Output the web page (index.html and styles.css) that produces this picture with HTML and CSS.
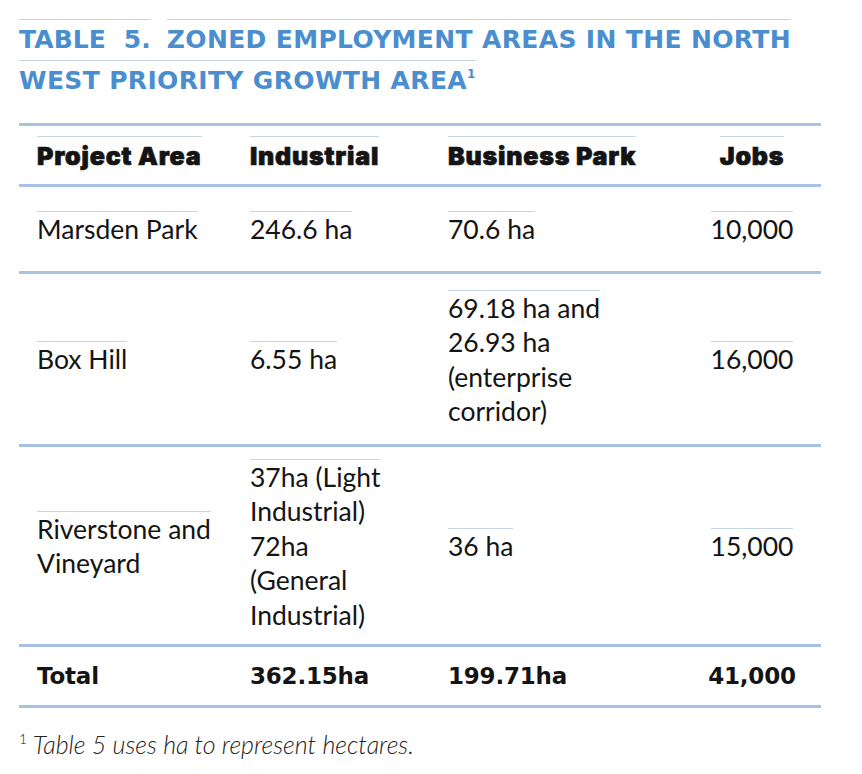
FILE: index.html
```html
<!DOCTYPE html>
<html lang="en">
<head>
<meta charset="utf-8">
<title>Table 5</title>
<link rel="stylesheet" href="styles.css">
</head>
<body>
<div class="page">
  <h1 class="title"><span class="ol ol-title ol-label">TABLE&nbsp; 5.</span> <span class="ol ol-title ol-gap">ZONED EMPLOYMENT AREAS IN THE NORTH<br>WEST PRIORITY GROWTH AREA<sup class="sup">1</sup></span></h1>

  <div class="table">
    <div class="row row-head">
      <div class="cell c1"><span class="ol ol-head">Project Area</span></div>
      <div class="cell c2"><span class="ol ol-head">Industrial</span></div>
      <div class="cell c3"><span class="ol ol-head">Business Park</span></div>
      <div class="cell c4"><span class="ol ol-head">Jobs</span></div>
    </div>
    <div class="row row-1">
      <div class="cell c1"><span class="ol">Marsden Park</span></div>
      <div class="cell c2"><span class="ol">246.6 ha</span></div>
      <div class="cell c3"><span class="ol">70.6 ha</span></div>
      <div class="cell c4"><span class="ol">10,000</span></div>
    </div>
    <div class="row row-2">
      <div class="cell c1"><span class="ol">Box Hill</span></div>
      <div class="cell c2"><span class="ol">6.55 ha</span></div>
      <div class="cell c3"><span class="ol">69.18 ha and<br>26.93 ha<br>(enterprise<br>corridor)</span></div>
      <div class="cell c4"><span class="ol">16,000</span></div>
    </div>
    <div class="row row-3">
      <div class="cell c1"><span class="ol">Riverstone and<br>Vineyard</span></div>
      <div class="cell c2"><span class="ol">37ha (Light<br>Industrial)<br>72ha<br>(General<br>Industrial)</span></div>
      <div class="cell c3"><span class="ol">36 ha</span></div>
      <div class="cell c4"><span class="ol">15,000</span></div>
    </div>
    <div class="row row-total">
      <div class="cell c1">Total</div>
      <div class="cell c2">362.15ha</div>
      <div class="cell c3">199.71ha</div>
      <div class="cell c4">41,000</div>
    </div>
  </div>

  <p class="note"><sup class="note-sup">1</sup> Table 5 uses ha to represent hectares.</p>
</div>
</body>
</html>
```

FILE: styles.css
```css
html, body {
  margin: 0;
  padding: 0;
  background: #ffffff;
}

.page {
  width: 802px;
  padding: 0 0 0 19px;
  font-family: "Lato", "Liberation Sans", sans-serif;
  color: #141414;
}

.title {
  margin: 0;
  padding-top: 19px;
  font-family: "DejaVu Sans", "Liberation Sans", sans-serif;
  font-weight: 700;
  font-size: 25px;
  line-height: 41px;
  color: #4a8ecf;
  letter-spacing: 0.35px;
  white-space: nowrap;
}

.ol {
  border-top: 1px solid #c4d5ea;
  padding-top: 0;
}

.ol-title {
  padding-top: 5px;
}

.ol-label {
  letter-spacing: 0.1px;
}

.ol-gap {
  margin-left: 7px;
}

.sup {
  font-size: 12px;
  vertical-align: 11px;
  line-height: 0;
}

.table {
  margin-top: 22px;
  border-top: 3px solid #a9c1e2;
}

.row {
  display: grid;
  grid-template-columns: 231px 198px 235px 138px;
  border-bottom: 3px solid #a9c1e2;
  box-sizing: border-box;
}

.cell {
  display: flex;
  align-items: center;
  font-size: 26.5px;
  line-height: 34.5px;
}

.c1 {
  padding-left: 18px;
}

.c4 {
  justify-content: center;
}

.row-head {
  height: 61px;
}

.row-head .cell {
  font-family: "Inter", "DejaVu Sans", sans-serif;
  font-weight: 900;
  font-size: 25px;
  letter-spacing: 0.8px;
  -webkit-text-stroke: 0.7px #141414;
}

.ol-head {
  padding-top: 2px;
}

.row-1 {
  height: 87px;
}

.row-2 {
  height: 173px;
}

.row-3 {
  height: 200px;
}

.row-total {
  height: 61px;
}

.row-total .cell {
  font-family: "DejaVu Sans", "Liberation Sans", sans-serif;
  font-weight: 700;
  font-size: 23px;
  letter-spacing: -0.2px;
}

.note {
  margin: 21px 0 0 0;
  font-family: "Lato", "Liberation Sans", sans-serif;
  font-style: italic;
  font-weight: 300;
  font-size: 25px;
  line-height: 30px;
  color: #222222;
}

.note-sup {
  font-size: 14px;
  font-style: normal;
  vertical-align: 10px;
  line-height: 0;
}
```
